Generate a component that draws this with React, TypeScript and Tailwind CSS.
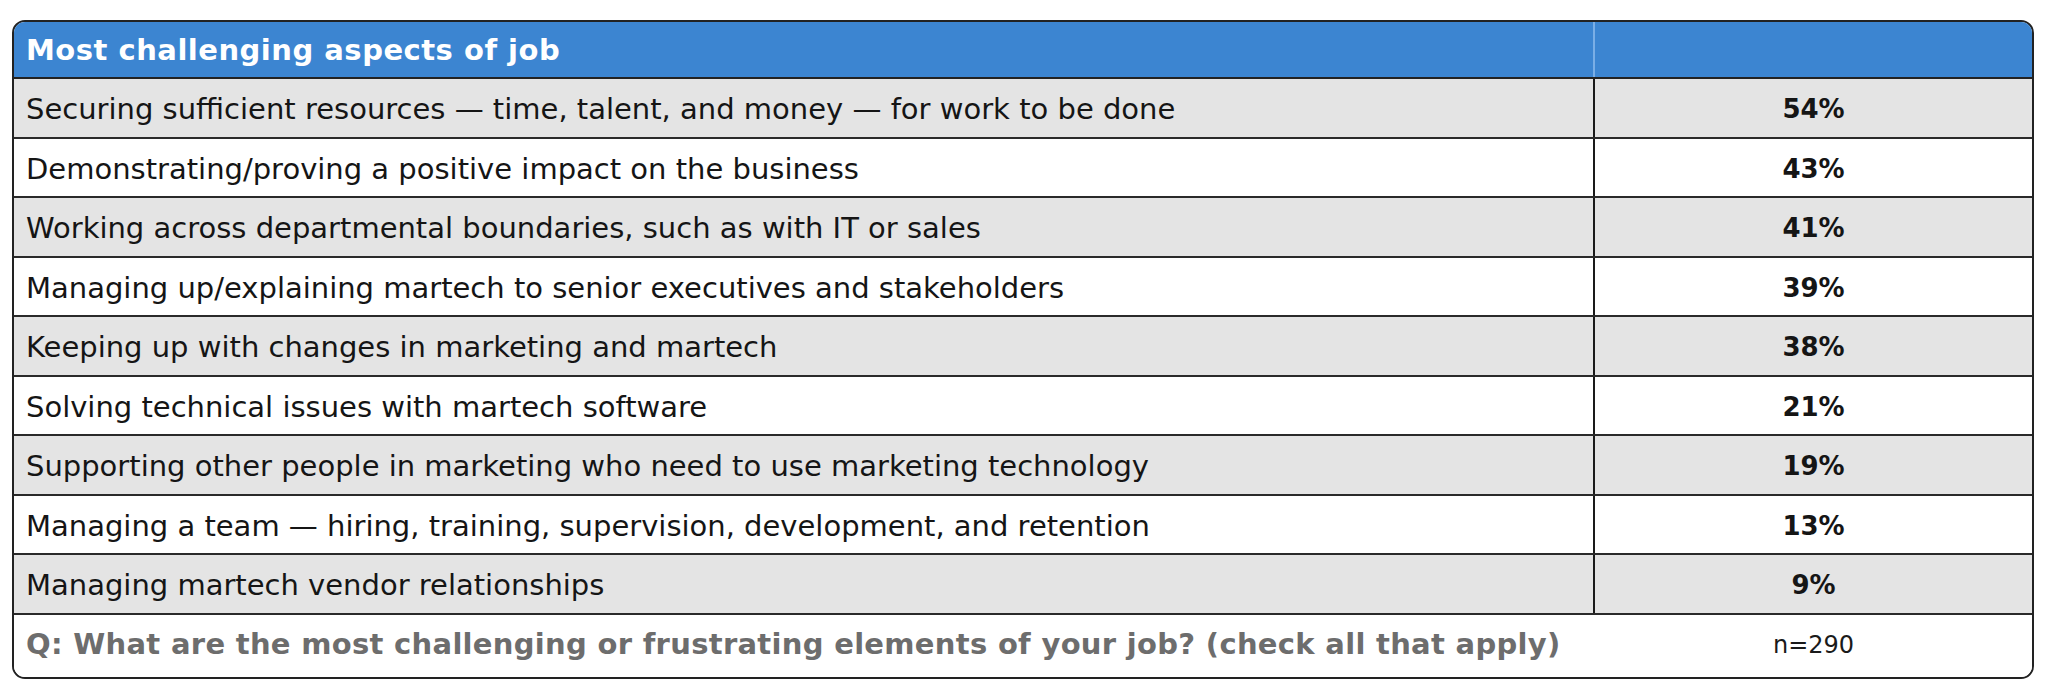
const rows = [
  { label: "Securing sufficient resources — time, talent, and money — for work to be done", pct: "54%" },
  { label: "Demonstrating/proving a positive impact on the business", pct: "43%" },
  { label: "Working across departmental boundaries, such as with IT or sales", pct: "41%" },
  { label: "Managing up/explaining martech to senior executives and stakeholders", pct: "39%" },
  { label: "Keeping up with changes in marketing and martech", pct: "38%" },
  { label: "Solving technical issues with martech software", pct: "21%" },
  { label: "Supporting other people in marketing who need to use marketing technology", pct: "19%" },
  { label: "Managing a team — hiring, training, supervision, development, and retention", pct: "13%" },
  { label: "Managing martech vendor relationships", pct: "9%" },
];

export default function App() {
  return (
    <div className="w-[2048px] h-[694px] bg-white pt-[20px] pl-[12px] font-['DejaVu_Sans',sans-serif]">
      <div className="w-[2022px] border-2 border-[#222] rounded-[13px] overflow-hidden">
        {/* Header */}
        <div className="grid grid-cols-[1581px_1fr] h-[57px] bg-[#3c85d1] border-b-2 border-[#222]">
          <div className="flex items-center pl-[12px] pt-[2px] border-r-2 border-[#7aaee6] text-white font-bold text-[29px] tracking-[0.5px]">
            Most challenging aspects of job
          </div>
          <div />
        </div>

        {/* Rows */}
        {rows.map((row, i) => (
          <div
            key={row.label}
            className={`grid grid-cols-[1581px_1fr] h-[59.5px] border-b-2 border-[#2a2a2a] ${
              i % 2 === 0 ? "bg-[#e4e4e4]" : "bg-white"
            }`}
          >
            <div className="flex items-center pl-[12px] pt-[4px] border-r-2 border-[#1a1a1a] text-[29px] text-[#151515]">
              {row.label}
            </div>
            <div className="flex items-center justify-center pt-[4px] font-bold text-[26px] text-[#151515]">
              {row.pct}
            </div>
          </div>
        ))}

        {/* Footer */}
        <div className="grid grid-cols-[1581px_1fr] h-[62px] bg-white">
          <div className="flex items-center pl-[12px] pb-[2px] font-bold text-[29px] text-[#6d6d6d] tracking-[0.3px]">
            Q: What are the most challenging or frustrating elements of your job? (check all that apply)
          </div>
          <div className="flex items-center justify-center pb-[2px] text-[24px] text-[#1a1a1a]">n=290</div>
        </div>
      </div>
    </div>
  );
}
